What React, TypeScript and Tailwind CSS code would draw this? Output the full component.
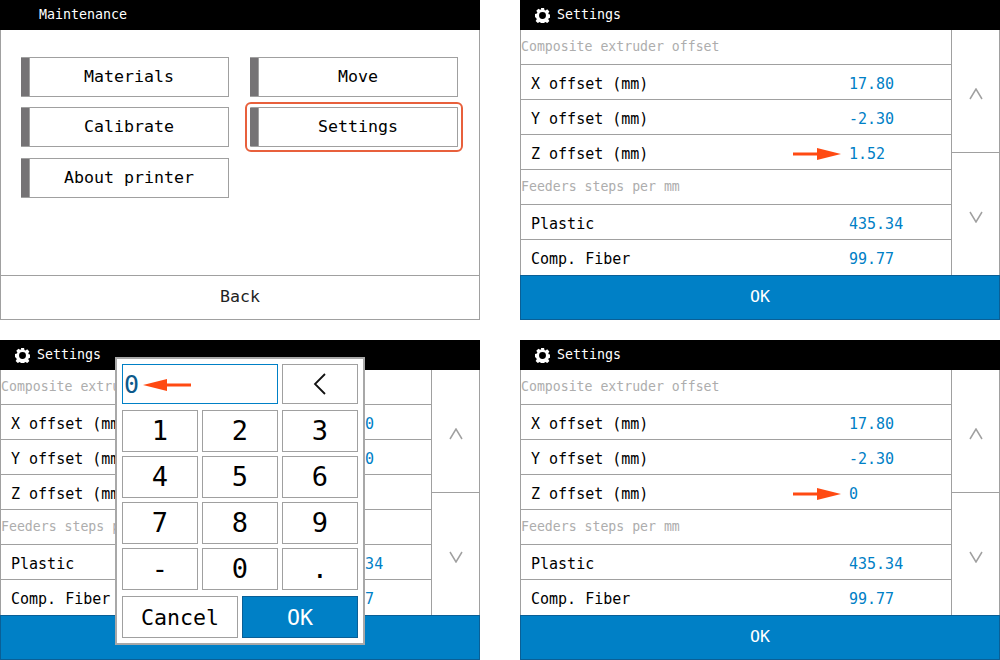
const mono = "font-['DejaVu_Sans_Mono','Liberation_Mono',monospace] slashed-zero";

function Gear() {
  return (
    <svg viewBox="0 0 24 24" className="w-[15px] h-[15px] shrink-0" fill="#fff">
      <path
        fillRule="evenodd"
        d="M9.500 0h5l.6 3.200 1.700.7 2.700-1.800 3.500 3.500-1.800 2.700.7 1.700 3.100.6v5l-3.100.6-.7 1.700 1.800 2.700-3.500 3.500-2.700-1.800-1.700.7-.6 3.100h-5l-.6-3.100-1.700-.7-2.700 1.800-3.500-3.500 1.800-2.700-.7-1.700L0 14.500v-5l3.100-.6.7-1.700L2 4.500 5.500 1l2.700 1.800 1.700-.7zM12 6.500a5.500 5.500 0 1 0 0 11 5.500 5.500 0 0 0 0-11z"
      />
    </svg>
  );
}

function Header({ title, gear }: { title: string; gear?: boolean }) {
  return (
    <div className={`h-[30px] bg-black text-white flex items-center text-[13.3px] shrink-0 ${gear ? 'pl-[15px] gap-[7px]' : 'pl-[39px]'}`}>
      {gear && <Gear />}
      <span>{title}</span>
    </div>
  );
}

function MenuButton({ label, highlight }: { label: string; highlight?: boolean }) {
  return (
    <div className={`relative h-[40px] flex border border-[#a0a0a0] border-l-0 text-[16.6px] text-black ${highlight ? 'outline-2 outline-offset-[3px] outline-[#e8603c] rounded-[1px]' : ''}`}>
      <div className="w-[8px] bg-[#757375] shrink-0" />
      <div className="flex-1 flex items-center justify-center border-l border-[#a0a0a0]">{label}</div>
    </div>
  );
}

function MaintenancePanel() {
  return (
    <div className="h-[320px] flex flex-col">
      <Header title="Maintenance" />
      <div className="flex-1 border-x border-[#a0a0a0] pt-[27px] px-[20px]">
        <div className="grid grid-cols-[208px_208px] gap-x-[21px] gap-y-[10px]">
          <MenuButton label="Materials" />
          <MenuButton label="Move" />
          <MenuButton label="Calibrate" />
          <MenuButton label="Settings" highlight />
          <div className="mt-[1px]"><MenuButton label="About printer" /></div>
        </div>
      </div>
      <div className="h-[45px] border border-[#a0a0a0] flex items-center justify-center text-[16.6px] text-[#222]">Back</div>
    </div>
  );
}

function SectionRow({ label }: { label: string }) {
  return (
    <div className="h-[35px] border-b border-[#a0a0a0] flex items-center text-[13.2px] text-[#adadad]">{label}</div>
  );
}

function ValueRow({ label, value, last }: { label: string; value: string; last?: boolean }) {
  return (
    <div className={`h-[35px] flex items-center pl-[10px] text-[15px] text-black ${last ? 'pt-[3px]' : 'pt-[4px] border-b border-[#a0a0a0]'}`}>
      <span className="w-[318px] shrink-0">{label}</span>
      <span className="text-[#0080c6]">{value}</span>
    </div>
  );
}

function Chevron({ up }: { up?: boolean }) {
  return (
    <svg viewBox="0 0 14 12" className="w-[14px] h-[12px]" fill="none" stroke="#a0a0a0" strokeWidth="1.500">
      <path d={up ? 'M1 11L7 1l6 10' : 'M1 1l6 10 6-10'} />
    </svg>
  );
}

function RedArrow({ left }: { left?: boolean }) {
  return (
    <svg viewBox="0 0 48 12" className="w-[48px] h-[12px]">
      <path fill="#ff4a12" d={left ? 'M0 6L24 0v4.500h24v3H24V12z' : 'M48 6L24 0v4.500H0v3h24V12z'} />
    </svg>
  );
}

function SettingsPanel({ zValue, children }: { zValue: string; children?: React.ReactNode }) {
  return (
    <div className="relative h-[320px] flex flex-col">
      <Header title="Settings" gear />
      <div className="flex-1 flex border-l border-r border-[#a0a0a0] min-h-0">
        <div className="w-[431px] shrink-0 border-r border-[#a0a0a0]">
          <SectionRow label="Composite extruder offset" />
          <ValueRow label="X offset (mm)" value="17.80" />
          <ValueRow label="Y offset (mm)" value="-2.30" />
          <ValueRow label="Z offset (mm)" value={zValue} />
          <SectionRow label="Feeders steps per mm" />
          <ValueRow label="Plastic" value="435.34" />
          <ValueRow label="Comp. Fiber" value="99.77" last />
        </div>
        <div className="flex-1 flex flex-col">
          <div className="h-[123px] border-b border-[#a0a0a0] flex items-center justify-center pt-[6px]"><Chevron up /></div>
          <div className="flex-1 flex items-center justify-center pt-[6px]"><Chevron /></div>
        </div>
      </div>
      <div className="h-[45px] shrink-0 bg-[#0080c6] border border-[#0a5f96] flex items-center justify-center text-[16.6px] text-white">OK</div>
      {children}
    </div>
  );
}

function Keypad() {
  const keys = ['1', '2', '3', '4', '5', '6', '7', '8', '9', '-', '0', '.'];
  return (
    <div className="absolute left-[115px] top-[17px] w-[250px] h-[288px] bg-white border-2 border-[#a8a8a8] p-[5px]">
      <div className="flex gap-[4px]">
        <div className="relative w-[156px] h-[40px] border border-[#0080c6] flex items-center pl-[1px] pt-[1px] text-[25px] text-[#0d5a8c]">
          0
          <div className="absolute left-[20px] top-[14px]"><RedArrow left /></div>
        </div>
        <div className="w-[76px] h-[40px] border border-[#a0a0a0] flex items-center justify-center">
          <svg viewBox="0 0 14 22" className="w-[14px] h-[22px]" fill="none" stroke="#111" strokeWidth="1.800">
            <path d="M12 1L2 11l10 10" />
          </svg>
        </div>
      </div>
      <div className="grid grid-cols-[76px_76px_76px] gap-[4px] mt-[6px]">
        {keys.map(k => (
          <div key={k} className="h-[42px] border border-[#a0a0a0] flex items-center justify-center text-[27px] text-black">{k}</div>
        ))}
      </div>
      <div className="flex gap-[4px] mt-[6px]">
        <div className="w-[116px] h-[42px] border border-[#a0a0a0] flex items-center justify-center pt-[3px] text-[21.6px] text-black">Cancel</div>
        <div className="w-[116px] h-[42px] bg-[#0080c6] border border-[#0a5f96] flex items-center justify-center pt-[3px] text-[21.6px] text-white">OK</div>
      </div>
    </div>
  );
}

export default function App() {
  return (
    <div className={`w-[1000px] h-[660px] bg-white grid grid-cols-[480px_480px] gap-x-[40px] gap-y-[20px] ${mono}`}>
      <MaintenancePanel />
      <SettingsPanel zValue="1.52">
        <div className="absolute left-[273px] top-[148px]"><RedArrow /></div>
      </SettingsPanel>
      <SettingsPanel zValue="1.52">
        <Keypad />
      </SettingsPanel>
      <SettingsPanel zValue="0">
        <div className="absolute left-[273px] top-[148px]"><RedArrow /></div>
      </SettingsPanel>
    </div>
  );
}
